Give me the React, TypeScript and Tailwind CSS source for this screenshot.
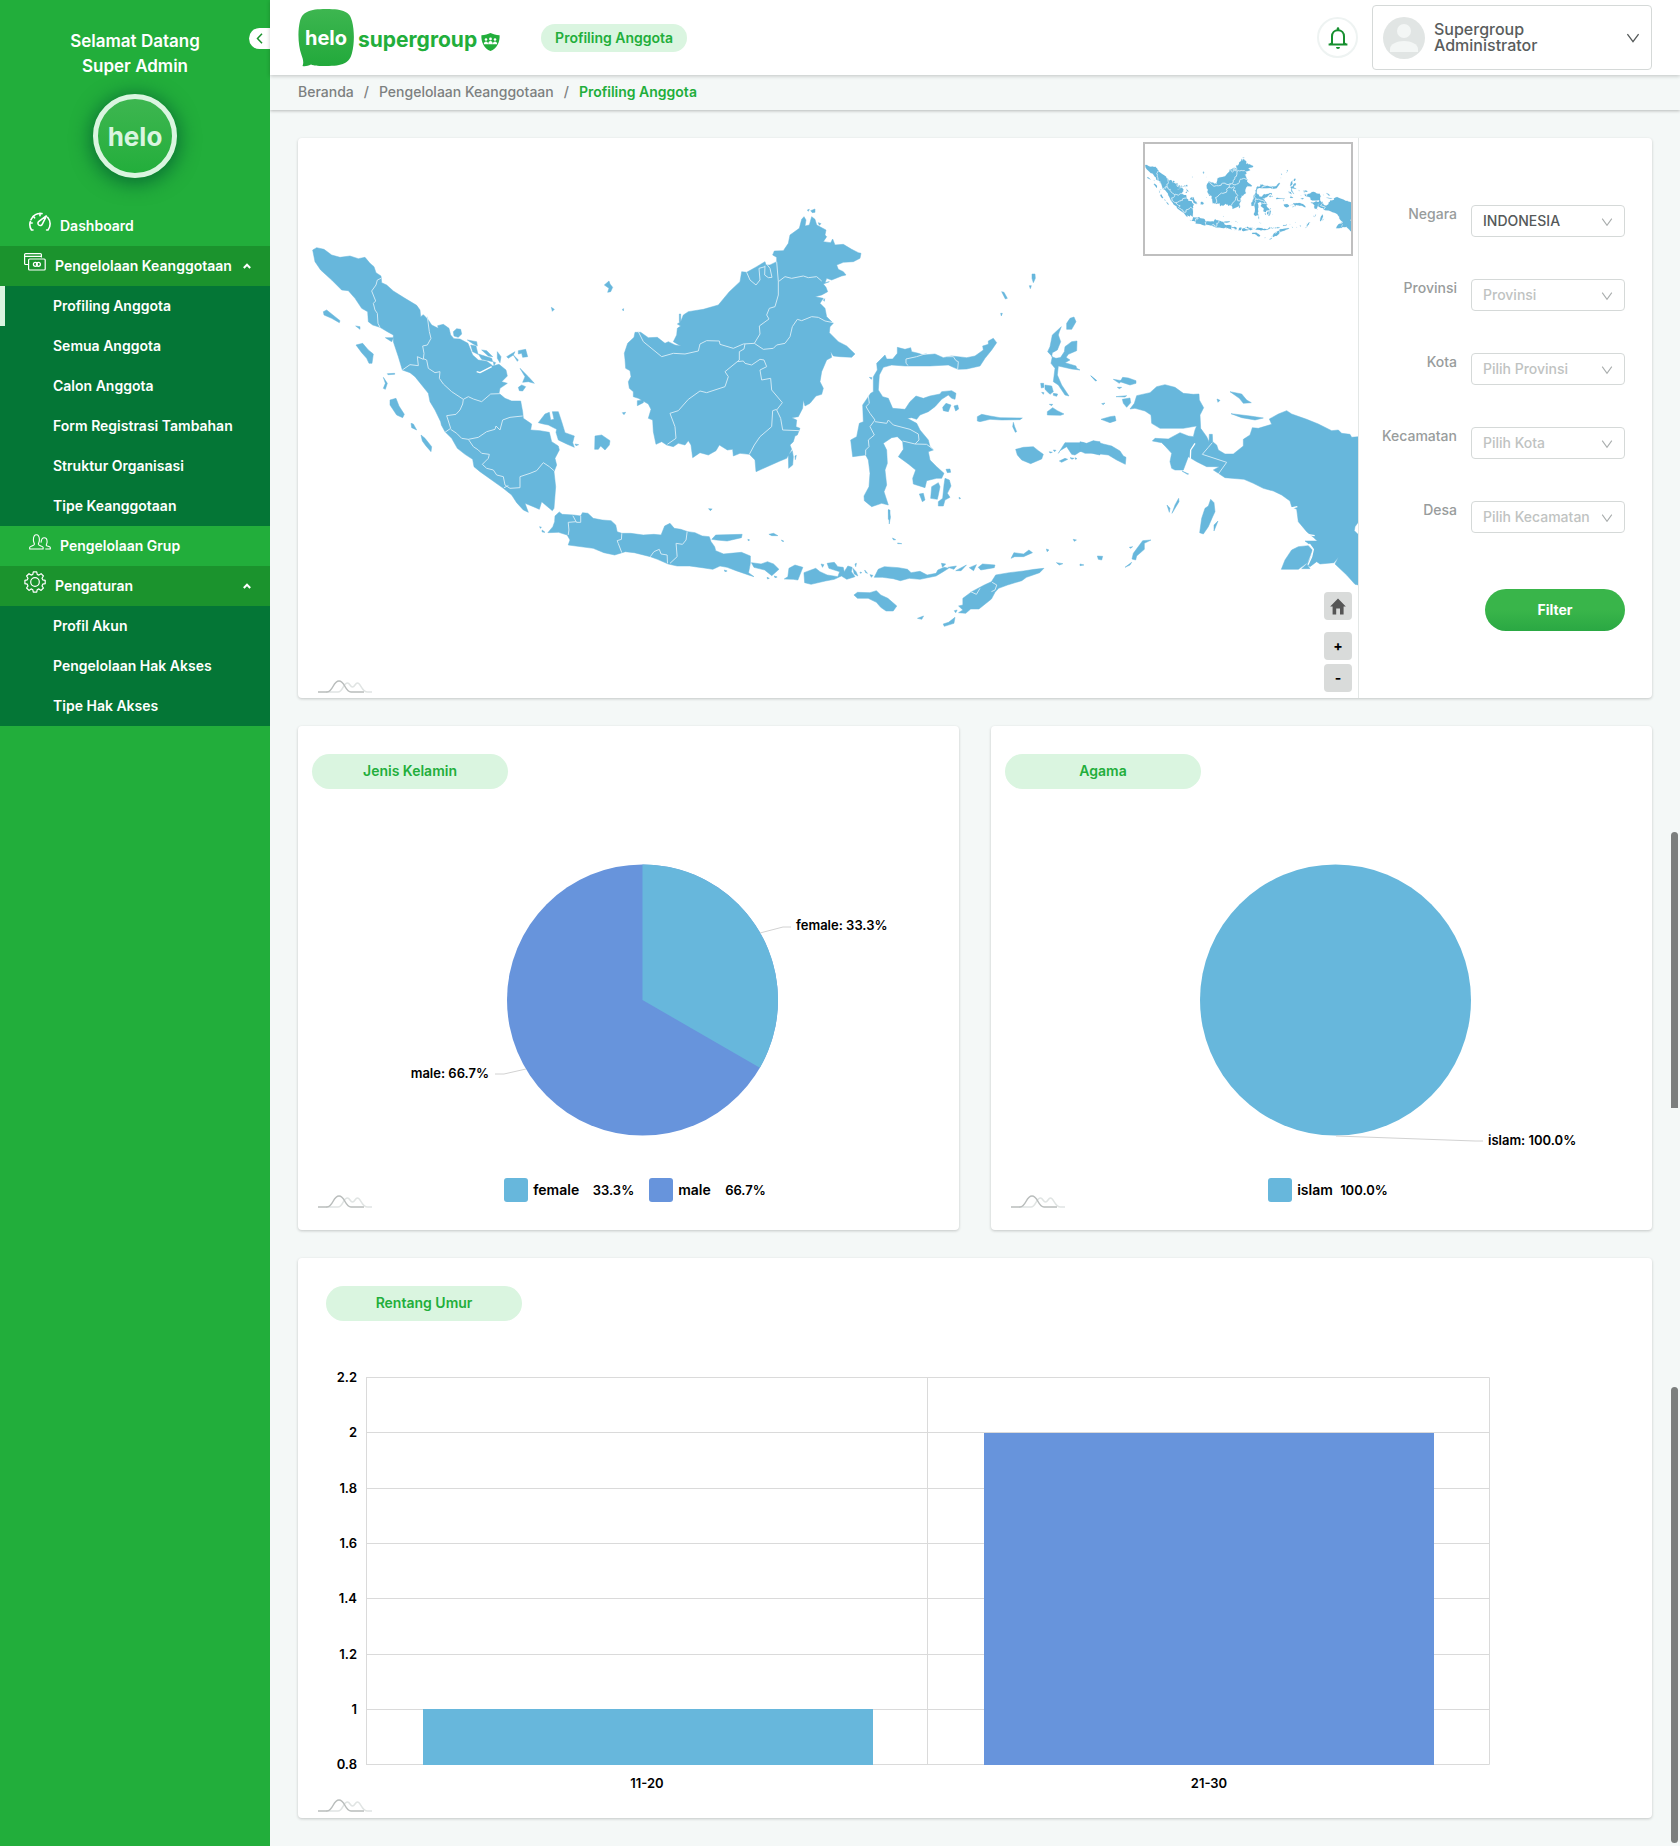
import React from "react";

const BLUE = "#67b7dc";
const INDIGO = "#6794dc";

/* ---------- Icons ---------- */

function GaugeIcon() {
  return (
    <svg width="22" height="20" viewBox="0 0 22 20" fill="none" stroke="#fff" strokeWidth="1.6" strokeLinecap="round" aria-hidden="true">
      <path d="M4 18H2.5A9.6 9.6 0 0 1 1.4 9.5M2 7.6A10 10 0 0 1 13 1.6M18.8 5.4A10 10 0 0 1 19 18H17.6" />
      <path d="M11 1.4v2.4M4.3 4.4 5.6 5.8M1.4 11h1.8" />
      <path d="M17.6 3.6 13.4 12a2.3 2.3 0 1 1-3.8-2.4Z" />
    </svg>
  );
}

function CardsIcon() {
  return (
    <svg width="22" height="18" viewBox="0 0 22 18" fill="none" stroke="#fff" strokeWidth="1.2" aria-hidden="true">
      <path d="M4.5 11.5H1.6a1 1 0 0 1-1-1V1.6a1 1 0 0 1 1-1h14.800a1 1 0 0 1 1 1v3M.6 3.400h16.800" />
      <rect x="4.600" y="6" width="16.600" height="11" rx="1" />
      <circle cx="11.400" cy="11.300" r="2" />
      <circle cx="14.400" cy="11.300" r="2" />
    </svg>
  );
}

function PeopleIcon() {
  return (
    <svg width="22" height="16" viewBox="0 0 22 16" fill="none" stroke="#fff" strokeWidth="1.1" strokeLinejoin="round" aria-hidden="true">
      <path d="M.7 15v-1.8c0-1 4.3-1.6 4.7-2.8.2-1-1-2-1-4.600C4.400 2.500 5.400.700 7.400.700s3 1.800 3 5.100c0 2.600-1.200 3.600-1 4.600.400 1.200 4.700 1.800 4.700 2.800V15Z" />
      <path d="M12 8.600c.300-3 1.200-4.800 3.200-4.800s2.900 1.600 2.900 3.900c0 2-1 2.800-.800 3.600.300.900 4 1.300 4 2.300V15h-5" />
    </svg>
  );
}

function GearIcon() {
  return (
    <svg width="22" height="22" viewBox="0 0 22 22" fill="none" stroke="#fff" strokeWidth="1.2" strokeLinejoin="round" aria-hidden="true">
      <path d="M9.300.900h3.400l.500 2.500 1.700.700 2.200-1.400 2.300 2.300L18 7.200l.700 1.600 2.500.500v3.400l-2.500.500-.700 1.700 1.400 2.100-2.300 2.400-2.200-1.500-1.700.800-.500 2.400H9.300l-.500-2.400-1.700-.800-2.100 1.500L2.600 17 4 14.900l-.700-1.700-2.400-.5V9.300l2.400-.5L4 7.200 2.600 5 5 2.700l2.100 1.400 1.700-.7Z" />
      <circle cx="11" cy="11" r="4.300" />
    </svg>
  );
}

function SmallChevronUp() {
  return (
    <svg width="8" height="6" viewBox="0 0 8 6" fill="none" stroke="#fff" strokeWidth="2" aria-hidden="true">
      <path d="M.8 5 4 1.700 7.200 5" />
    </svg>
  );
}

function ChevronDown({ size = 12, color = "#a9adad" }: { size?: number; color?: string }) {
  return (
    <svg width={size} height={size} viewBox="0 0 12 12" fill="none" stroke={color} strokeWidth="1.1" aria-hidden="true">
      <path d="M1.200 2.600 6 9.200l4.800-6.600" />
    </svg>
  );
}

function BellIcon() {
  return (
    <svg width="20" height="24" viewBox="0 0 20 24" aria-hidden="true">
      <path d="M4 18v-7.600C4 6.800 6.500 4.200 10 4.200s6 2.600 6 6.200V18" fill="none" stroke="#168f2f" strokeWidth="2" />
      <path d="M.6 17.400h18.800v2H.6ZM8.700 4V2.600a1.300 1.300 0 0 1 2.600 0V4ZM8 21h4a2 2 0 0 1-4 0Z" fill="#168f2f" />
      <path d="M4 15.500 1.500 18H5ZM16 15.500l2.500 2.500H15Z" fill="#168f2f" />
    </svg>
  );
}

function HomeIcon() {
  return (
    <svg width="16" height="17" viewBox="0 0 16 17" aria-hidden="true">
      <path d="M8 .500 15.800 8.500H13.600V16.500H10V10.500H6.200V16.500H2.600V8.500H.2Z" fill="#555" />
    </svg>
  );
}

function HeloBubble() {
  return (
    <svg width="56" height="58" viewBox="0 0 56 58" role="img" aria-label="helo">
      <defs>
        <linearGradient id="bubble" x1="0" y1="0" x2="0" y2="1">
          <stop offset="0" stopColor="#3db650" />
          <stop offset="1" stopColor="#22a93b" />
        </linearGradient>
      </defs>
      <path d="M28 0C46 0 52 3 54 12c2.500 10 2.500 22 0 32-2.500 10-9 13-26 13-6 0-12 0-15-1.500-3 1.500-6 2-8.500 1.500C6 54 5 50 3.500 46 0 36-.5 22 2 12 4.500 3 11 0 28 0Z" fill="url(#bubble)" />
      <text x="28" y="36" textAnchor="middle" fill="#fff" fontSize="20" fontWeight="700">helo</text>
    </svg>
  );
}

function ShieldIcon() {
  return (
    <svg width="19" height="18" viewBox="0 0 19 18" aria-hidden="true">
      <path d="M9.500 0C12 1.300 15 2 18.600 2.200 19 9 16 15.500 9.500 18 3 15.500 0 9 .4 2.200 4 2 7 1.300 9.500 0Z" fill="#22ae3b" />
      <g fill="#fff">
        <circle cx="5" cy="6.500" r="1.300" />
        <circle cx="9.500" cy="6" r="1.400" />
        <circle cx="14" cy="6.500" r="1.300" />
        <path d="M2.800 11.200c0-3.600 4.400-3.600 4.400 0ZM7.200 11.200c0-4.200 4.600-4.200 4.600 0ZM11.800 11.200c0-3.600 4.400-3.600 4.400 0Z" />
      </g>
    </svg>
  );
}

function ChartMark() {
  return (
    <svg width="54" height="13" viewBox="0 0 54 13" fill="none" strokeWidth="1.500" aria-hidden="true">
      <path d="M8 12h12c5 0 5-9 9.500-9 2.500 0 2.500 4 5 4s2.500-4 5-4c3.500 0 4 9 10 9H54" stroke="#e0e4e3" />
      <path d="M0 12h9c6 0 6-11 12-11s6 11 12 11h13" stroke="#b9bdbc" />
    </svg>
  );
}

/* ---------- Map ---------- */

const SUMATRA = [
  "M38,90 L50,83 72,88 95,105 120,112 150,108 175,116 195,112 210,130 222,140 228,158 243,168 245,188 260,195 280,213 315,235 350,256 360,270 362,290 370,284 376,290 385,300 395,315 415,325 413,317 430,313 447,325 452,345 462,356 480,357 504,370 512,390 518,405 535,420 560,424 572,432 578,438 597,433 618,450 622,468 605,485 622,490 600,505 597,520 615,535 635,543 662,543 668,575 670,595 695,612 692,630 720,632 748,637 755,665 775,678 778,690 765,715 770,735 762,755 767,800 762,865 757,872 740,858 725,845 718,868 700,860 675,850 685,877 670,870 650,848 635,825 610,805 575,780 540,755 522,740 518,718 495,703 472,685 455,655 435,635 424,615 422,605 405,570 390,545 385,520 365,495 345,470 330,458 307,450 295,410 280,365 280,345 262,335 240,322 218,315 205,305 203,275 185,265 165,235 145,212 125,210 95,180 62,150 45,125Z",
  "M460,335 L470,326 482,328 485,342 475,352 462,348Z",
  "M502,360 L530,365 532,378 520,372Z M512,375 L528,378 534,403 518,395Z M545,390 L560,392 578,410 565,408Z M535,402 L575,415 578,425 545,418Z M592,395 L603,410 600,428 592,415Z M580,425 L587,428 582,436Z",
  "M620,410 L645,395 640,405 625,415Z M655,392 L677,388 683,410 668,412 665,400 655,402Z M640,405 L655,420 652,424Z M660,445 L685,470 703,490 685,485 668,487 675,470Z M655,502 L665,495 677,500 668,513 658,512Z",
  "M715,608 L735,582 748,577 752,600 762,598 757,575 775,575 785,605 795,638 823,648 818,668 823,682 800,672 775,660 768,637 770,628 745,615 730,612Z M825,672 L836,674 828,677Z",
  "M70,275 L80,270 120,302 118,308 95,295 72,285Z M167,318 L180,320 180,328Z M168,375 L188,370 205,390 220,402 216,430 207,430 200,415 185,398Z M256,353 L280,353 275,365 262,357Z M262,461 L284,460 284,463 264,464Z M250,472 L262,490 256,508 250,505 256,490Z",
  "M270,540 L288,535 297,558 313,583 308,593 290,585 270,555Z M333,610 L340,612 350,630 335,623Z M363,645 L375,655 395,680 393,695 378,678 367,663Z M754,262 L763,268 757,274Z",
];
const SUMATRA_LINES =
  "M243,175 L232,180 228,195 215,213 227,243 220,250 225,270 232,280 234,310 240,322 M382,290 L388,335 393,355 382,375 368,378 372,400 370,418 352,410 355,437 330,434 307,450 M370,416 L380,420 385,445 405,458 420,455 418,475 430,492 455,515 490,538 505,530 520,537 545,545 572,522 600,521 M490,538 L488,552 480,570 468,583 440,587 452,625 435,637 M452,628 L470,640 485,655 505,658 535,652 560,635 585,628 588,618 600,630 608,600 630,592 668,588 M505,658 L520,680 535,690 545,700 568,703 565,715 547,733 560,745 580,750 590,765 610,770 615,795 630,805 660,803 660,770 690,760 710,752 730,728 748,740 762,752 M612,803 L625,797";
const SUMATRA_CHANNELS = "M530,455 L540,458 575,440";

const KALIMANTAN = [
  "M732,50 L738,60 735,78 748,75 755,50 765,58 770,75 798,90 795,105 800,110 790,125 812,128 818,117 825,135 850,133 875,148 895,158 903,160 900,175 880,185 850,187 830,195 835,208 850,215 858,225 845,228 815,240 800,235 795,248 808,245 790,252 798,262 803,275 785,285 765,290 790,295 780,310 795,325 800,350 820,370 810,380 808,398 835,425 860,438 885,462 875,472 840,470 820,468 812,455 815,472 800,480 785,515 780,545 790,565 785,583 768,588 750,610 735,618 730,600 728,625 715,650 695,653 710,660 708,680 720,685 712,705 705,708 700,725 690,735 695,748 680,775 660,783 588,815 585,780 568,763 540,760 520,768 518,748 502,750 478,735 468,752 445,765 420,758 398,773 393,735 385,722 375,735 355,730 340,740 320,735 305,725 288,733 280,695 278,660 265,655 273,628 265,612 235,595 220,590 220,575 208,565 205,545 213,530 210,512 197,505 195,478 193,460 203,430 222,412 225,397 242,397 265,413 292,412 315,430 325,425 345,435 362,438 340,425 350,405 352,385 362,378 352,372 362,365 370,345 385,335 430,328 475,315 508,275 540,245 545,215 560,217 590,200 615,185 618,195 630,195 650,185 650,172 638,165 643,153 670,152 685,130 690,105 718,85 725,58Z",
  "M752,32 L765,27 765,37 757,38Z M742,30 L748,28 745,34Z M775,68 L783,71 778,76Z M133,255 L147,243 150,252 158,262 152,275 143,277 147,265Z M187,328 L191,326 190,333Z M232,602 L250,600 250,608 232,617Z M187,638 L197,637 192,644Z M685,765 L697,752 700,770 698,795 686,805Z M705,768 L709,766 706,779Z M358,342 L362,342 362,365 358,365Z M105,708 L125,705 150,722 148,735 135,750 122,738 115,748 104,748Z M790,300 L794,296 793,304Z",
];
const KALIMANTAN_LINES =
  "M235,395 L250,425 305,470 340,460 375,462 415,453 420,432 440,422 478,423 480,433 520,445 550,432 583,430 610,448 640,445 650,435 675,430 690,410 697,380 712,358 725,362 755,350 775,352 795,363 820,368 M583,430 L600,402 598,378 627,357 620,345 628,325 645,320 655,285 655,245 650,185 M655,245 L675,230 695,235 730,228 745,233 770,230 785,243 M555,432 L552,447 538,455 538,480 495,515 505,530 495,560 440,578 420,573 385,598 355,632 330,640 345,680 348,715 322,733 M532,485 L550,483 555,490 575,495 600,478 612,480 620,500 600,510 605,540 632,535 635,570 667,608 650,630 662,655 668,690 718,692 M650,628 L638,632 635,680 600,710 583,735 568,763 M560,217 L570,240 588,255 600,240 597,205 615,200 M615,197 L614,225 625,233 636,232 630,205 622,195";

const SULAWESI = [
  "M232,262 L255,268 272,263 275,275 295,280 310,285 345,282 370,293 395,288 440,293 465,288 490,270 488,258 505,253 505,243 520,235 530,248 515,270 495,295 480,318 440,327 415,328 400,322 385,315 330,318 255,318 215,315 190,322 178,345 175,390 188,410 205,415 218,445 255,448 270,425 288,408 310,415 330,408 360,402 365,395 395,392 408,400 405,418 395,415 385,405 365,418 345,440 325,455 300,465 290,478 275,473 262,475 290,490 300,510 325,540 330,560 340,570 325,575 330,600 350,620 372,640 365,655 350,655 320,662 315,683 280,672 278,655 287,630 265,612 235,590 250,568 248,545 232,530 215,533 190,550 200,570 202,610 195,630 200,675 192,695 205,735 185,730 155,740 133,722 132,708 147,680 150,640 145,600 137,585 98,590 92,540 110,530 118,490 130,485 128,435 145,410 152,400 160,395 160,350 172,330 170,310 195,285 200,297 218,297 232,280Z",
  "M205,750 L210,750 210,778 205,778Z M368,442 L378,430 393,435 385,455 370,452Z M402,438 L413,435 416,447 407,453Z M378,628 L390,627 392,637 382,638Z M298,702 L310,700 315,720 307,725Z M335,680 L355,668 360,680 355,705 352,718 332,715Z M375,655 L388,660 393,678 382,700 390,712 375,720 370,738 355,738 355,725 368,715 372,675Z M417,712 L422,715 418,717Z M148,352 L156,353 154,358Z",
  "M636,42 L645,42 646,55 640,68 636,55Z M628,77 L634,77 631,86Z M545,95 L552,97 562,115 556,117Z M542,160 L547,160 544,168Z",
  "M724,200 L718,215 715,225 722,245 712,270 697,278 695,290 708,295 735,290 750,300 735,308 768,318 770,325 780,330 755,327 715,318 712,345 725,375 747,408 735,405 715,375 700,365 705,325 693,310 697,290 683,275 690,260 697,225Z M735,260 L755,245 771,243 770,272 745,283 735,297 722,292 733,275Z M740,190 L750,175 762,171 768,185 755,208 740,208Z",
  "M662,370 L671,370 672,382 664,384Z M675,375 L695,378 700,395 690,403 682,395 675,388Z M700,400 L713,402 710,409 700,406Z M665,397 L672,398 670,403Z M682,455 L698,443 712,452 732,462 722,466 682,465Z M688,433 L698,433 695,437Z M472,470 L485,463 510,468 540,473 607,474 600,479 545,480 510,478 480,485 472,483Z M580,487 L584,500 590,515 586,517 578,500Z",
  "M587,568 L610,562 640,560 655,572 670,583 665,597 632,611 605,600 592,585Z M715,580 L735,548 790,548 800,553 820,543 840,545 840,585 825,582 805,575 790,572 780,575 765,585 755,583 740,560 720,572Z M718,603 L735,595 743,598 725,607Z M750,593 L762,595 756,598Z M765,593 L771,596 766,598Z M688,575 L697,577 690,579Z M700,570 L708,571 704,575Z M812,347 L830,362 826,362Z",
];
const SULAWESI_LINES =
  "M145,408 L148,430 138,440 150,460 165,480 150,500 163,525 145,540 147,560 137,570 137,585 M165,485 L200,490 205,480 220,495 270,508 295,522 297,540 285,552 248,543 M285,552 L320,553 340,568 M320,280 L290,290 258,297 258,310 265,317 M380,290 L400,290 408,302 415,305 413,328";

const PAPUA = [
  "M170,167 L210,158 230,140 255,134 285,142 310,160 340,163 357,162 358,180 371,203 360,225 362,265 380,290 387,305 388,283 397,283 398,305 410,315 415,330 435,342 460,342 490,318 490,298 510,285 517,263 535,265 575,253 568,237 595,222 620,212 635,222 680,238 715,252 755,272 775,270 785,280 810,283 815,292 836,290 836,545 825,560 823,572 836,585 836,735 825,733 800,705 765,672 775,652 762,668 720,672 710,665 690,680 680,672 695,650 700,628 690,614 675,603 690,603 712,603 700,592 680,575 655,545 650,508 635,500 630,483 605,465 580,453 550,445 520,430 492,418 435,413 415,400 400,390 418,380 380,380 350,365 333,355 325,350 310,390 285,390 275,385 270,365 275,340 255,318 245,308 217,303 225,295 265,297 300,278 325,288 340,290 345,270 350,258 310,265 240,265 215,250 213,225 195,213 165,205 150,207 163,190Z",
  "M128,112 L145,114 168,122 168,130 150,135 120,125Z M100,118 L125,122 118,130Z M112,142 L125,142 118,146Z M108,170 L140,167 135,171Z M127,178 L150,174 152,188 140,202 130,190Z M63,238 L90,230 105,228 108,242 90,248Z M65,191 L75,189 70,194Z",
  "M450,155 L485,162 500,180 514,188 490,190 478,175Z M411,177 L420,181 414,187Z M453,221 L510,228 550,234 525,240 485,233Z M261,495 L270,505 268,517Z M296,475 L297,485 276,520 285,495Z M392,478 L402,488 405,515 398,530 385,560 370,582 359,578 365,535 375,505 385,498Z M414,543 L402,573 402,555Z",
  "M188,602 L213,600 193,610 193,628 170,648 167,660 156,657 160,640Z M135,682 L155,667 150,675Z M52,648 L68,649 65,660 55,658Z M148,622 L158,620 152,625Z M0,672 L12,675 0,677Z M604,688 L615,660 635,630 655,620 685,617 697,630 688,655 682,668 655,688Z M665,686 L680,672 690,686Z M306,393 L326,402 322,403Z M33,108 L49,121 47,123Z",
  "M0,305 L20,310 40,302 70,312 95,318 120,333 130,348 138,352 136,373 110,360 85,345 60,342 40,340 15,340 0,333Z",
];
const PAPUA_LINES = "M397,308 L385,322 367,343 440,367 415,402";
const PAPUA_CHANNELS = "M345,310 L332,330 331,356 M668,580 L680,583 704,587 M634,504 L652,500 M688,612 L700,628 695,650 684,674";

const JAVA = [
  "M110,96 L118,103 150,105 170,108 175,98 190,100 205,115 230,120 255,122 268,135 272,155 285,160 310,160 345,165 375,163 395,165 405,138 420,130 432,145 450,148 470,155 490,158 510,168 530,170 535,185 545,200 548,212 570,222 590,220 620,217 645,228 645,250 640,278 655,290 640,285 605,272 580,262 560,258 540,268 510,263 475,258 440,258 415,252 385,238 365,230 320,218 295,215 265,225 235,218 205,205 135,195 140,180 132,165 108,157 78,158 92,140 97,125 98,108Z",
  "M537,178 L548,165 622,163 620,173 580,183 550,180Z M528,86 L538,87 533,92Z M697,163 L710,160 722,167 705,167Z M732,180 L739,184 734,184Z M638,178 L643,180 639,182Z M55,140 L60,142 57,145Z M62,150 L70,157 62,156Z M572,270 L580,273 574,275Z",
  "M648,248 L675,252 693,245 710,252 725,268 705,287 685,270 655,262Z M692,292 L698,295 693,297Z M712,288 L720,291 714,293Z M750,290 L753,265 770,255 792,262 778,300 765,298 740,297Z M795,278 L815,270 828,265 840,275 860,285 890,290 895,275 865,265 860,250 880,247 890,260 905,262 908,275 918,258 930,262 928,275 938,290 915,298 900,288 880,298 855,303 815,313 797,308Z M843,252 L851,254 847,262Z M938,252 L942,250 940,260Z M932,265 L941,275 946,288 936,282Z M952,276 L957,278 953,280Z M965,270 L973,280 968,278Z M980,284 L988,286 984,292Z",
  "M992,292 L1003,268 1020,260 1060,263 1085,268 1095,278 1120,274 1140,285 1165,280 1170,270 1188,262 1200,265 1185,275 1165,288 1120,298 1090,295 1065,302 1045,296 1015,292Z M1180,250 L1192,252 1183,262Z M1198,262 L1222,258 1215,268Z M1220,272 L1250,255 1235,272Z M1258,263 L1278,254 1270,272Z M1283,262 L1295,252 1330,255 1328,263 1290,270Z M1375,235 L1383,218 1410,222 1425,210 1435,218 1410,230 1385,230Z",
  "M935,345 L945,337 980,338 998,332 1010,345 1030,355 1055,378 1045,393 1025,393 1010,382 998,367 975,355 945,355Z M1228,398 L1240,390 1228,378 1240,375 1240,355 1265,335 1300,315 1320,305 1332,285 1370,278 1410,273 1440,268 1467,265 1455,278 1418,292 1405,302 1365,315 1340,325 1330,337 1320,357 1285,387 1262,387 1248,400Z M1185,432 L1200,427 1218,412 1215,430 1188,439Z M1216,392 L1224,390 1220,398Z M1113,415 L1130,408 1125,418Z M1032,88 L1037,110 1034,132Z M1502,248 L1520,251 1510,255Z M1549,178 L1558,180 1552,184Z M1474,207 L1481,210 1476,215Z M1043,174 L1052,179 1046,180Z M1057,189 L1069,191 1058,191Z",
];
const JAVA_LINES =
  "M148,107 L158,127 170,127 170,108 M158,125 L135,127 137,150 135,165 M285,160 L284,178 272,182 275,190 285,218 M468,155 L465,180 455,193 437,190 440,230 420,250 M365,230 L375,215 390,208 395,222 412,225 413,250 M1262,335 L1278,343 1288,325 M1322,307 L1335,315 1330,330 1320,335";

const REGIONS = [
  { name: "sumatra", place: "translate(300 220) scale(.33333)", land: SUMATRA, lines: SUMATRA_LINES, channels: SUMATRA_CHANNELS },
  { name: "kalimantan", place: "translate(560 200) scale(.33333)", land: KALIMANTAN, lines: KALIMANTAN_LINES, channels: "" },
  { name: "sulawesi", place: "translate(820 260) scale(.33333)", land: SULAWESI, lines: SULAWESI_LINES, channels: "" },
  { name: "papua", place: "translate(1080 340) scale(.33333)", land: PAPUA, lines: PAPUA_LINES, channels: PAPUA_CHANNELS },
  { name: "java", place: "translate(520 480) scale(.35714 .33333)", land: JAVA, lines: JAVA_LINES, channels: "" },
];

function Archipelago() {
  return (
    <>
      {REGIONS.map((r) => (
        <g key={r.name} transform={r.place}>
          <path d={r.land.join(" ")} fill={BLUE} stroke={BLUE} strokeWidth="1.500" strokeLinejoin="round" />
          <path d={r.channels} fill="none" stroke="#fff" strokeWidth="4" strokeLinejoin="round" />
          <path d={r.lines} fill="none" stroke="#d0e9f5" strokeWidth="1" strokeLinejoin="round" vectorEffect="non-scaling-stroke" />
        </g>
      ))}
    </>
  );
}

/* ---------- Sidebar ---------- */

function MenuLink({ icon, children }: { icon: React.ReactNode; children: React.ReactNode }) {
  return (
    <a href="#" className="flex h-10 items-center gap-[9px] pl-[29px] text-sm font-semibold text-white">
      <span className="pb-2">{icon}</span>
      {children}
    </a>
  );
}

function MenuGroup({ icon, title, items, active }: { icon: React.ReactNode; title: string; items: string[]; active?: string }) {
  return (
    <div>
      <button type="button" className="flex h-10 w-full items-center bg-[#1b932d] pl-6 pr-[19px] text-sm font-semibold text-white">
        <span className="pb-2">{icon}</span>
        <span className="ml-[9px] flex-1 whitespace-nowrap text-left">{title}</span>
        <SmallChevronUp />
      </button>
      <ul className="bg-[#047636]">
        {items.map((item) => (
          <li key={item}>
            <a
              href="#"
              className={
                item === active
                  ? "flex h-10 items-center border-l-[5px] border-[#daf5e0] pl-12 text-sm font-semibold text-white"
                  : "flex h-10 items-center pl-[53px] text-sm font-semibold text-white"
              }
            >
              {item}
            </a>
          </li>
        ))}
      </ul>
    </div>
  );
}

function Sidebar() {
  return (
    <aside className="relative w-[270px] shrink-0 bg-[#22ae3b]">
      <button type="button" aria-label="Tutup menu" className="absolute right-0 top-7 flex h-[21px] w-[21px] items-center justify-center rounded-l-full bg-white">
        <svg width="7" height="11" viewBox="0 0 7 11" fill="none" stroke="#1b932d" strokeWidth="1.500" aria-hidden="true">
          <path d="M6 .8 1.500 5.500 6 10.200" />
        </svg>
      </button>
      <div className="flex flex-col items-center pt-[29px]">
        <p className="w-full text-center text-[17px] font-semibold leading-[25px] text-white">
          Selamat Datang
          <br />
          Super Admin
        </p>
        <div className="mt-[15px] flex h-[84px] w-[84px] items-center justify-center rounded-full border-[5px] border-[#daf5e0] bg-linear-to-b from-[#3db650] to-[#22ae3b] text-[26px] font-bold text-[#daf5e0] shadow-[0_3px_20px_2px_rgba(4,100,50,0.9)]">
          helo
        </div>
      </div>
      <nav className="mt-7">
        <MenuLink icon={<GaugeIcon />}>Dashboard</MenuLink>
        <MenuGroup
          icon={<CardsIcon />}
          title="Pengelolaan Keanggotaan"
          active="Profiling Anggota"
          items={["Profiling Anggota", "Semua Anggota", "Calon Anggota", "Form Registrasi Tambahan", "Struktur Organisasi", "Tipe Keanggotaan"]}
        />
        <MenuLink icon={<PeopleIcon />}>Pengelolaan Grup</MenuLink>
        <MenuGroup icon={<GearIcon />} title="Pengaturan" items={["Profil Akun", "Pengelolaan Hak Akses", "Tipe Hak Akses"]} />
      </nav>
    </aside>
  );
}

/* ---------- Header ---------- */

function Header() {
  return (
    <header className="relative z-10 flex h-[75px] items-center bg-white pl-7 pr-7 shadow-[0_1px_4px_rgba(0,0,0,0.22)]">
      <a href="#" className="flex items-center">
        <HeloBubble />
        <span className="ml-1 pt-1 text-[21px] font-bold leading-7 text-[#22ae3b]">supergroup</span>
        <span className="ml-1 pt-2">
          <ShieldIcon />
        </span>
      </a>
      <h1 className="ml-[41px] flex h-7 w-[146px] items-center justify-center rounded-full bg-[#daf5e0] text-sm font-semibold text-[#22ae3b]">Profiling Anggota</h1>
      <button type="button" aria-label="Notifikasi" className="ml-auto flex h-[41px] w-[41px] items-center justify-center rounded-full border-2 border-[#eef3f2] bg-white">
        <BellIcon />
      </button>
      <button type="button" className="ml-[14px] flex h-[65px] w-[280px] items-center rounded border border-[#d5d9d8] bg-white pl-[10px] pr-[11px] text-left">
        <svg width="42" height="42" viewBox="0 0 42 42" aria-hidden="true">
          <circle cx="21" cy="21" r="21" fill="#e1e5e4" />
          <circle cx="21" cy="14" r="7" fill="#f3f6f5" />
          <path d="M7 35v-3c0-5 7-8 14-8s14 3 14 8v3Z" fill="#f3f6f5" />
        </svg>
        <span className="ml-[9px] flex-1 pb-0.5 text-base font-medium leading-4 text-[#595d5d]">
          Supergroup
          <br />
          Administrator
        </span>
        <ChevronDown size={14} color="#555959" />
      </button>
    </header>
  );
}

function Breadcrumb() {
  return (
    <nav aria-label="Breadcrumb" className="flex h-[35px] items-center gap-[10px] pb-0.5 pl-7 text-sm font-medium text-[#7c8080] shadow-[0_1px_3px_rgba(0,0,0,0.25)]">
      <a href="#">Beranda</a>
      <span>/</span>
      <a href="#">Pengelolaan Keanggotaan</a>
      <span>/</span>
      <span className="font-semibold text-[#22ae3b]">Profiling Anggota</span>
    </nav>
  );
}

/* ---------- Map card ---------- */

const FILTERS = [
  { id: "negara", label: "Negara", value: "INDONESIA", chosen: true },
  { id: "provinsi", label: "Provinsi", value: "Provinsi", chosen: false },
  { id: "kota", label: "Kota", value: "Pilih Provinsi", chosen: false },
  { id: "kecamatan", label: "Kecamatan", value: "Pilih Kota", chosen: false },
  { id: "desa", label: "Desa", value: "Pilih Kecamatan", chosen: false },
];

function FilterForm() {
  return (
    <form className="flex w-[294px] shrink-0 flex-col gap-[42px] border-l border-[#e3e7e6] pr-[27px] pt-[67px]">
      {FILTERS.map((f) => (
        <div key={f.id} className="flex h-8 justify-end gap-[14px]">
          <label htmlFor={f.id} className="text-sm font-medium leading-[18px] text-[#989c9c]">
            {f.label}
          </label>
          <div className="relative w-[154px]">
            <select
              id={f.id}
              className={
                f.chosen
                  ? "h-8 w-full appearance-none rounded border border-[#d5d9d8] bg-white pl-[11px] pr-6 text-sm font-medium text-[#555959]"
                  : "h-8 w-full appearance-none rounded border border-[#d5d9d8] bg-white pl-[11px] pr-6 text-sm font-medium text-[#bfc3c2]"
              }
            >
              <option>{f.value}</option>
            </select>
            <span className="pointer-events-none absolute right-3 top-[11px]">
              <ChevronDown />
            </span>
          </div>
        </div>
      ))}
      <button type="button" className="mt-[14px] h-[42px] w-[140px] self-end rounded-full bg-linear-to-b from-[#39b54a] from-50% to-[#2aa843] text-sm font-bold text-white">
        Filter
      </button>
    </form>
  );
}

const MAP_BUTTON = "flex h-7 w-7 items-center justify-center rounded-sm bg-[#d9dbda] text-sm font-bold leading-none text-black";

function MapCard() {
  return (
    <section className="flex overflow-hidden rounded bg-white shadow-[0_1px_3px_rgba(0,0,0,0.2)]">
      <div className="relative min-w-0 flex-1">
        <svg viewBox="298 138 1060 560" className="block w-full" role="img" aria-label="Peta Indonesia">
          <Archipelago />
        </svg>
        <div className="absolute right-[5px] top-1 border-2 border-[#bfbfbf] bg-white">
          <svg width="206" height="110" viewBox="312 142 1045 558" className="block" aria-hidden="true">
            <Archipelago />
          </svg>
        </div>
        <div className="absolute bottom-[6px] right-[6px] flex flex-col gap-1">
          <button type="button" aria-label="Beranda peta" className={MAP_BUTTON + " mb-2"}>
            <HomeIcon />
          </button>
          <button type="button" className={MAP_BUTTON}>+</button>
          <button type="button" className={MAP_BUTTON}>-</button>
        </div>
        <div className="absolute bottom-[5px] left-5">
          <ChartMark />
        </div>
      </div>
      <FilterForm />
    </section>
  );
}

/* ---------- Charts ---------- */

function Pill({ children }: { children: React.ReactNode }) {
  return <h2 className="flex h-[35px] w-[196px] items-center justify-center rounded-full bg-[#daf5e0] pb-0.5 text-sm font-semibold text-[#22ae3b]">{children}</h2>;
}

type Slice = { name: string; value: string; swatch: string };

function PieCard({ title, slices, children }: { title: string; slices: Slice[]; children: React.ReactNode }) {
  return (
    <section className="relative flex-1 rounded bg-white pb-7 pt-7 shadow-[0_1px_3px_rgba(0,0,0,0.2)]">
      <div className="pl-[14px]">
        <Pill>{title}</Pill>
      </div>
      <svg viewBox="0 0 661 389" className="block w-full text-[13px] font-semibold" role="img" aria-label={title}>
        {children}
      </svg>
      <ul className="flex h-6 items-center justify-center pl-7 text-sm font-semibold text-black">
        {slices.map((s) => (
          <li key={s.name} className="flex items-center pr-[15px]">
            <span className={s.swatch} />
            <span className="ml-[5px]">{s.name}</span>
            <span className="w-[55px] text-right text-[13px]">{s.value}</span>
          </li>
        ))}
      </ul>
      <div className="absolute bottom-[22px] left-5">
        <ChartMark />
      </div>
    </section>
  );
}

const TICKS = ["2.2", "2", "1.8", "1.6", "1.4", "1.2", "1", "0.8"];

function BarCard() {
  return (
    <section className="relative rounded bg-white pt-7 shadow-[0_1px_3px_rgba(0,0,0,0.2)]">
      <div className="pl-7">
        <Pill>Rentang Umur</Pill>
      </div>
      <svg viewBox="0 0 1354 497" className="block w-full text-[13px] font-semibold" role="img" aria-label="Rentang Umur">
        {TICKS.map((t, i) => (
          <g key={t}>
            <path d={`M68 ${56.5 + Math.round(i * 55.3)}H1191.500`} stroke="#dadada" />
            <text x="59" y={61 + Math.round(i * 55.3)} textAnchor="end">{t}</text>
          </g>
        ))}
        <path d="M68.500 56.500V443.500M629.500 56.500V443.500M1191.500 56.500V443.500" stroke="#dadada" />
        <rect x="125" y="388" width="450" height="56" fill={BLUE} />
        <rect x="686" y="112" width="450" height="332" fill={INDIGO} />
        <text x="349" y="467" textAnchor="middle">11-20</text>
        <text x="911" y="467" textAnchor="middle">21-30</text>
      </svg>
      <div className="absolute bottom-[6px] left-5">
        <ChartMark />
      </div>
    </section>
  );
}

export default function App() {
  return (
    <div className="relative flex min-h-screen bg-[#f4f8f7] font-['Inter',sans-serif]">
      <Sidebar />
      <div className="min-w-0 flex-1">
        <Header />
        <Breadcrumb />
        <main className="flex flex-col gap-7 p-7">
          <MapCard />
          <div className="flex gap-8">
            <PieCard
              title="Jenis Kelamin"
              slices={[
                { name: "female", value: "33.3%", swatch: "h-6 w-6 rounded-[3px] bg-[#67b7dc]" },
                { name: "male", value: "66.7%", swatch: "h-6 w-6 rounded-[3px] bg-[#6794dc]" },
              ]}
            >
              <circle cx="344.500" cy="211" r="135.500" fill={INDIGO} />
              <path d="M344.500 211V75.500A135.500 135.500 0 0 1 461.850 278.750Z" fill={BLUE} />
              <path d="M462 144 485 138h8M228 280 206 285h-9" fill="none" stroke="#d2d2d2" />
              <text x="498" y="141">female: 33.3%</text>
              <text x="191" y="289" textAnchor="end">male: 66.7%</text>
            </PieCard>
            <PieCard title="Agama" slices={[{ name: "islam", value: "100.0%", swatch: "h-6 w-6 rounded-[3px] bg-[#67b7dc]" }]}>
              <circle cx="344.500" cy="211" r="135.500" fill={BLUE} />
              <path d="M345 347 484 352h8" fill="none" stroke="#d2d2d2" />
              <text x="497" y="356">islam: 100.0%</text>
            </PieCard>
          </div>
          <BarCard />
        </main>
      </div>
      <div className="absolute right-[2px] top-[832px] h-[276px] w-[7px] rounded-t-full bg-[#7c7f7e]" />
      <div className="absolute right-[2px] top-[1387px] h-[456px] w-[7px] rounded-full bg-[#7c7f7e]" />
    </div>
  );
}
